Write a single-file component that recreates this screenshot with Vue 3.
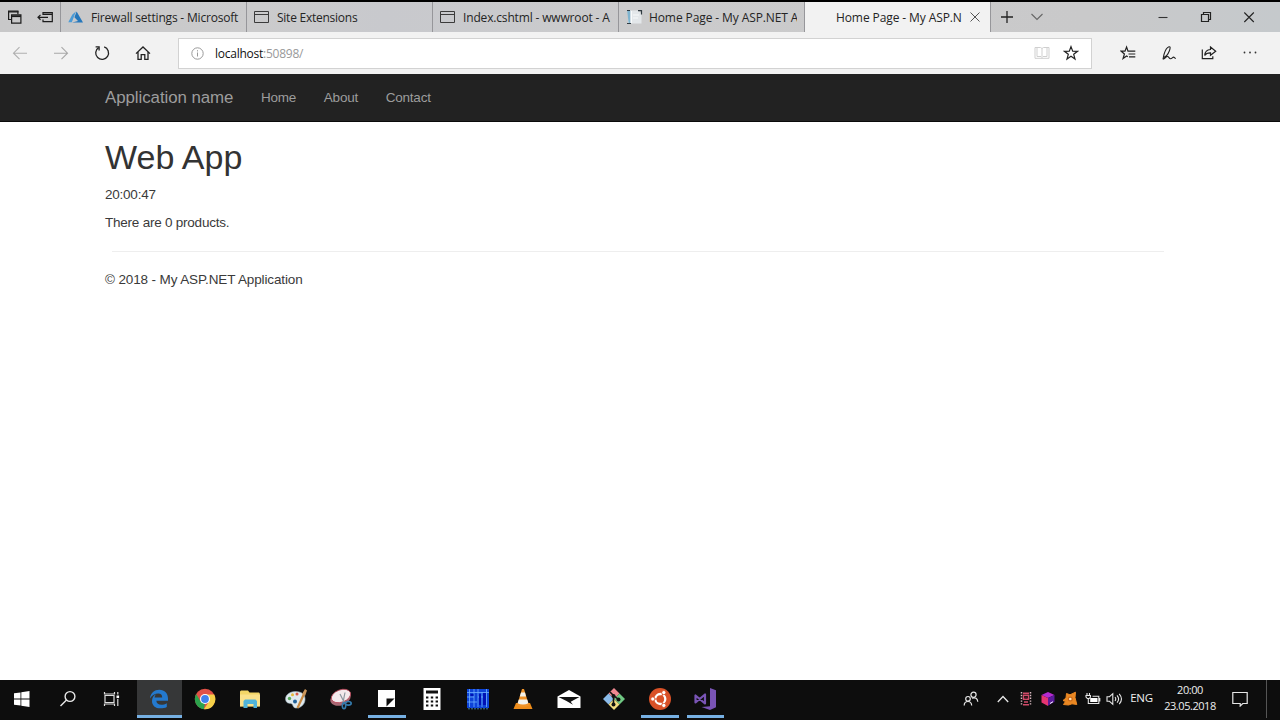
<script setup>
import { ref } from 'vue';

const tabs = ref([
  { title: 'Firewall settings - Microsoft', icon: 'azure', spacing: '-0.19px' },
  { title: 'Site Extensions', icon: 'window', spacing: '-0.25px' },
  { title: 'Index.cshtml - wwwroot - A', icon: 'window', spacing: '-0.16px' },
  { title: 'Home Page - My ASP.NET A', icon: 'page', spacing: '-0.1px' },
  { title: 'Home Page - My ASP.N', icon: '', active: true, spacing: '-0.1px' },
]);
const links = ref(['Home', 'About', 'Contact']);
const time = ref('20:00:47');
const products = ref(0);
</script>

<template>
  <div class="screen">
    <div class="tabbar">
      <div class="tabtools">
        <svg width="16" height="16" viewBox="0 0 16 16" fill="none" stroke="#1c1c1c" stroke-width="1.2">
          <path d="M4 10.500H1.600V2.200h9.300v3" />
          <path d="M1 2.800h10.500M4.600 5.800h9.300v8.400H4.600z" />
          <path d="M4.600 7.200h9.300" stroke-width="1.800" />
        </svg>
        <svg width="18" height="16" viewBox="0 0 18 16" fill="none" stroke="#1c1c1c" stroke-width="1.2">
          <path d="M6 6V3.600h9.300v9H6v-2M6 5.300h9.300M11 8.300H1M3.500 5.900 1 8.300 3.500 10.700" />
        </svg>
      </div>
      <div v-for="tab in tabs" :key="tab.title" class="tab" :class="{ active: tab.active }">
        <span class="tabicon">
          <svg v-if="tab.icon == 'azure'" width="16" height="14" viewBox="0 0 16 14">
            <path d="M8 1.200 4.200 4.800.300 12.200h3.500z" fill="#4b9bd6" />
            <path d="M8.600 1.500 6.400 7.200l3.600 3.900-6 1.300h11z" fill="#2577bb" />
          </svg>
          <svg v-if="tab.icon == 'window'" width="16" height="14" viewBox="0 0 16 14" fill="none" stroke="#3b3b3b">
            <path d="M.5 1.500h14v11H.5zM.5 4.500h14" />
          </svg>
          <svg v-if="tab.icon == 'page'" width="17" height="16" viewBox="0 0 17 16">
            <path d="M2 1.500h10.500l3 3v10H2z" fill="#e3e7ea" />
            <path d="M1.2 1.500h3v13H2.600z" fill="#7fb4cf" />
            <path d="M1 1.500h3M12 1.600h3.500v4M1 14.500h4" fill="none" stroke="#303b42" stroke-width="1.2" />
            <path d="M5.500 2v12M7 6h6M7 9h5" stroke="#f8fafb" />
          </svg>
        </span>
        <span class="tabtitle" :style="{ letterSpacing: tab.spacing }">{{ tab.title }}</span>
        <svg v-if="tab.active" class="close" width="10" height="10" viewBox="0 0 10 10" stroke="#555" stroke-width="1">
          <path d="M.5.5l9 9M9.500.5l-9 9" />
        </svg>
      </div>
      <div class="newtab">
        <svg width="12" height="12" viewBox="0 0 12 12" stroke="#222" stroke-width="1.3"><path d="M0 6h12M6 0v12" /></svg>
        <svg width="12" height="8" viewBox="0 0 12 8" fill="none" stroke="#666" stroke-width="1.1"><path d="M.5 1 6 6.500 11.500 1" /></svg>
      </div>
      <div class="controls">
        <svg width="12" height="12" viewBox="0 0 12 12" stroke="#333" stroke-width="1.1"><path d="M1.500 6.500h9" /></svg>
        <svg width="12" height="12" viewBox="0 0 12 12" fill="none" stroke="#222" stroke-width="1.2"><path d="M1.500 3.500h7v7h-7zM3.500 3.500v-2h7v7h-2" /></svg>
        <svg width="12" height="12" viewBox="0 0 12 12" stroke="#222" stroke-width="1.1"><path d="M1.300 1.500l9.500 9.500M10.800 1.500 1.300 11" /></svg>
      </div>
    </div>

    <div class="toolbar">
      <div class="tools">
        <svg width="16" height="16" viewBox="0 0 16 16" fill="none" stroke="#b0b0b0" stroke-width="1.1"><path d="M15 8.200H1.500M7.500 2.200l-6 6 6 6" /></svg>
        <svg width="16" height="16" viewBox="0 0 16 16" fill="none" stroke="#a8a8a8" stroke-width="1.1"><path d="M1 8.200h13.500M8.500 2.200l6 6-6 6" /></svg>
        <svg width="16" height="16" viewBox="0 0 16 16" fill="none" stroke="#222" stroke-width="1.3"><path d="M10.200 1.900A6.400 6.400 0 1 1 4.600 2.600" /><path d="M1.600 1.900h3.500v3.600" /></svg>
        <svg width="16" height="16" viewBox="0 0 16 16" fill="none" stroke="#222" stroke-width="1.3"><path d="M1 8.600 8 2l7 6.600M3 7v7.300h3.200V9.600h3.600v4.700H13V7" /></svg>
      </div>
      <div class="address">
        <svg class="info" width="13" height="13" viewBox="0 0 13 13" fill="none" stroke="#999"><circle cx="6.500" cy="6.500" r="5.700" /><path d="M6.500 5.500v4M6.500 3.200v1.200" /></svg>
        <span class="url">localhost<i>:50898/</i></span>
        <svg width="16" height="14" viewBox="0 0 16 14" fill="none" stroke="#cfcfcf"><path d="M1 1.500h5.500L8 2.500l1.500-1H15v10.800H1zM8 2.500v10M3 1.500v9h4M13 1.500v9H9" /></svg>
        <svg class="star" width="16" height="16" viewBox="0 0 16 16" fill="none" stroke="#222" stroke-width="1.2"><path d="M8 1.600l1.700 4.500 4.800.2-3.800 3 1.300 4.700-4-2.700L4 14l1.300-4.700-3.800-3 4.800-.2z" /></svg>
      </div>
      <div class="tools right">
        <svg width="16" height="16" viewBox="0 0 16 16" fill="none" stroke="#222" stroke-width="1.2"><path d="M9.200 6.100H8L6.600 2 5 6.200H1.200l3.200 2.800-1.300 4.500 3.500-2.600 1.200.8M8.500 6.200h6.800M8.500 9h6.800M9 11.800h6.300" /></svg>
        <svg width="16" height="16" viewBox="0 0 16 16" fill="none" stroke="#222" stroke-width="1.1"><path d="M2 14.300 3 9.500C4 6 6 2.500 8 1.800c1.600-.3 1.300 1.600.3 4.200C7 9.300 5 11.700 3 12.300M2 14.300C4 13.500 5 11.500 6.500 11.500s1.500 2.200 3 2.200 2-1.600 3-1.600 1 1.300 2.300 1.400" /></svg>
        <svg width="16" height="16" viewBox="0 0 16 16" fill="none" stroke="#222" stroke-width="1.2"><path d="M1.300 4.500v9.200h10.500v-2.500M9.500 2l5.200 4.200-5.200 4V7.900C6.800 7.800 5 8.500 3.700 10.500 4 6.800 6 4.600 9.500 4.500z" /></svg>
        <svg width="16" height="16" viewBox="0 0 16 16" fill="#333"><circle cx="2.500" cy="7.500" r=".9" /><circle cx="8" cy="7.500" r=".9" /><circle cx="13.500" cy="7.500" r=".9" /></svg>
      </div>
    </div>

    <nav class="navbar">
      <span class="brand">Application name</span>
      <span v-for="link in links" :key="link" class="link">{{ link }}</span>
    </nav>

    <main>
      <h1>Web App</h1>
      <p>{{ time }}</p>
      <p>There are {{ products }} products.</p>
      <hr>
      <p class="copy">© 2018 - My ASP.NET Application</p>
    </main>

    <div class="taskbar">
      <!-- start, search, task view -->
      <div class="task start"><svg width="16" height="16" viewBox="0 0 16 16" fill="#fff"><path d="M0 2.300 6.500 1.400v6.200H0zM7.300 1.300 15.500 0v7.600H7.300zM0 8.400h6.500v6.200L0 13.700zM7.300 8.400h8.200V16l-8.200-1.300z" /></svg></div>
      <div class="task start"><svg width="18" height="18" viewBox="0 0 18 18" fill="none" stroke="#e8e8e8" stroke-width="1.400"><circle cx="11" cy="6.500" r="4.900" /><path d="M7.500 10 1.500 16" /></svg></div>
      <div class="task view"><svg width="18" height="16" viewBox="0 0 18 16" fill="none" stroke="#ddd" stroke-width="1.200"><path d="M2 4.500h9v7H2zM1.500 1v2H11.500V1M1.500 15v-2H11.500v2M14.800 1v2.500M14.800 8v7" /><path d="M13.500 4.500h2.600v2.600h-2.600z" fill="#fff" stroke="none" /></svg></div>
      <!-- pinned programs -->
      <div class="task open current"><svg width="20" height="20" viewBox="0 0 20 20"><path d="M1 9.500C1.500 4 5.500.8 10.300.8c5.500 0 8.700 3.800 8.700 8.700v2.300H7.300c.2 2.700 2.300 3.900 5 3.900 2 0 3.800-.5 5.500-1.500v3.700c-1.800 1-4 1.400-6.300 1.400-5.200 0-8.500-2.800-8.500-7.400 0-3 1.500-5.400 4.500-6.800-1.300 1-1.800 2.400-2 3.500h7.700c0-2.400-1.300-4-3.900-4C6 4.600 3 6.200 1 9.500z" fill="#2479ce" /></svg></div>
      <div class="task">
        <svg width="22" height="22" viewBox="0 0 22 22">
          <circle cx="11" cy="11" r="10.200" fill="#e05146" />
          <path d="M2.200 5.900 6.600 13.600 11 15.500 9.900 21.200A10.200 10.200 0 0 1 2.200 5.900z" fill="#2ba24c" />
          <path d="M11 6.400h9.200a10.200 10.200 0 0 1-10.300 14.800L15 13.400z" fill="#f5d048" />
          <circle cx="11" cy="11" r="5" fill="#fff" /><circle cx="11" cy="11" r="3.900" fill="#4081ec" />
        </svg>
      </div>
      <div class="task">
        <svg width="22" height="20" viewBox="0 0 22 20">
          <path d="M1 2.500 2 1.500h7l1.500 2H20l.8 1v13H1z" fill="#f3d667" /><path d="M1 5.500h20v11.800H1z" fill="#fae18a" />
          <path d="M4.500 19v-7l1.500-1.500h10.500L18 12v7h-3.500v-4h-6v4z" fill="#50b4da" />
        </svg>
      </div>
      <div class="task">
        <svg width="24" height="22" viewBox="0 0 24 22">
          <path d="M2 13C0 8 5 3.500 11.500 3.500S21.500 7 21 12s-5 8.500-9.500 8c-3-.4-1.800-3.200-4-4.200C5.500 15 3.500 16 2 13z" fill="#dfe9ee" stroke="#9fb5c0" stroke-width=".6" />
          <circle cx="5.500" cy="10.500" r="1.700" fill="#58a95a" /><circle cx="8.500" cy="6.800" r="1.500" fill="#e5ba39" /><circle cx="13" cy="6" r="1.500" fill="#d65b47" /><circle cx="11" cy="13.500" r="2" fill="#216299" />
          <path d="M13.500 20 20 6" stroke="#c78a42" stroke-width="2.200" /><path d="M18 6 21 1l2 1.500L21 8z" fill="#c99559" />
        </svg>
      </div>
      <div class="task">
        <svg width="24" height="22" viewBox="0 0 24 22">
          <ellipse cx="11.500" cy="10.500" rx="10.500" ry="6.800" fill="#a86873" transform="rotate(-20 11.500 10.500)" />
          <ellipse cx="12" cy="8" rx="10" ry="6.200" fill="#f3e9ec" stroke="#b74457" stroke-width=".8" transform="rotate(-20 12 8)" />
          <path d="M11 6l4.500 9M16 4.500l-2 10" stroke="#8b969f" stroke-width="1.200" />
          <ellipse cx="15" cy="17.800" rx="1.700" ry="2.900" fill="none" stroke="#347bad" stroke-width="1.600" /><ellipse cx="19.300" cy="15.300" rx="2.900" ry="1.800" fill="none" stroke="#347bad" stroke-width="1.600" />
        </svg>
      </div>
      <div class="task open"><svg width="18" height="18" viewBox="0 0 18 18"><path d="M0 0h17v17H0z" fill="#fff" /><path d="M8.500 8.500h8L8.500 16.500z" fill="#0d0d0d" /></svg></div>
      <div class="task"><svg width="18" height="22" viewBox="0 0 18 22"><path d="M.5 0h17v22H.5z" fill="#fff" /><path d="M3 2.500h12v3H3z" fill="#111" /><path d="M3 9.500h12M3 13.500h12M3 17.500h12" stroke="#111" stroke-width="2" stroke-dasharray="2.400" /></svg></div>
      <div class="task"><svg width="22" height="21" viewBox="0 0 22 21"><path d="M0 0h22v19H0z" fill="#0d43d8" /><path d="M0 3.500h22M0 8h7M11 8h8M0 13h10M2.500 0v18M7 0v18M11 0v18M15 3v15M19.500 0v18" stroke="#6eb0ff" stroke-width=".8" /><path d="M3.500 5h3v2h-3zM12 5h2v11h-2zM16 4h3v12h-3z" fill="#0011b5" /><path d="M1 19.800h20" stroke="#427b9b" stroke-dasharray="2 1" /></svg></div>
      <div class="task"><svg width="20" height="22" viewBox="0 0 20 22"><path d="M3 15h14l2.500 6H.5z" fill="#ed8c1a" /><path d="M9 1h2l5 16.500c-3 1.700-9 1.700-12 0z" fill="#ef9329" /><path d="M8 4.500h4l1 4H6.800zM5.800 11.500h8.400l1.200 3.800c-3.500 1.600-7.500 1.600-10.800 0z" fill="#f2f2ec" /></svg></div>
      <div class="task"><svg width="24" height="20" viewBox="0 0 24 20"><path d="M.5 7.500 12 1l11.500 6.500V19H.5z" fill="#fff" /><path d="M1.500 8h21l-8.800 4.800L16 15.800 9.500 12z" fill="#111" /></svg></div>
      <div class="task">
        <svg width="24" height="24" viewBox="0 0 24 24">
          <path d="M12 1l5.500 5.500L12 12 6.500 6.500z" fill="#ef8890" /><path d="M6.500 6.500 12 12l-5.500 5.500L1 12z" fill="#8bbbe9" />
          <path d="M17.500 6.500 23 12l-5.500 5.500L12 12z" fill="#70c883" /><path d="M12 12l5.500 5.500L12 23l-5.500-5.500z" fill="#f2dc80" />
          <path d="M8 5l3.500 3.500v9M11.500 8.500l5 4" fill="none" stroke="#111" stroke-width="1.600" /><circle cx="11.500" cy="9" r="2" fill="#111" /><circle cx="16.500" cy="12.500" r="2" fill="#111" /><circle cx="11.500" cy="17.500" r="2" fill="#111" />
        </svg>
      </div>
      <div class="task open">
        <svg width="24" height="24" viewBox="0 0 24 24">
          <circle cx="12" cy="12" r="11" fill="#d95127" /><circle cx="12.300" cy="12" r="5" fill="none" stroke="#fff" stroke-width="2.300" />
          <path d="M12 12H5M12 12l3.500-6M12 12l3.500 6" stroke="#d95127" stroke-width="1.200" />
          <circle cx="4.800" cy="12" r="2.100" fill="#fff" stroke="#d95127" stroke-width=".8" /><circle cx="15.800" cy="5.600" r="2.100" fill="#fff" stroke="#d95127" stroke-width=".8" /><circle cx="15.800" cy="18.400" r="2.100" fill="#fff" stroke="#d95127" stroke-width=".8" />
        </svg>
      </div>
      <div class="task open"><svg width="24" height="24" viewBox="0 0 24 24"><path d="M17 1l6 2.300v17L17 23 8.500 20l8.500-.8z" fill="#7954b5" /><path d="M2.500 8.500v7L12 7.500v9z" fill="none" stroke="#7954b5" stroke-width="2.200" stroke-linejoin="round" /></svg></div>

      <div class="tray">
        <div class="people"><svg width="16" height="16" viewBox="0 0 16 16" fill="none" stroke="#e6e6e6" stroke-width="1.200"><circle cx="10.500" cy="3.800" r="2.600" /><circle cx="5" cy="7.800" r="2.300" /><path d="M1.200 14.500c0-2.600 1.500-4 3.800-4s3.500 1.500 3.700 4M9 7.300c3.500-1.500 5.500.5 5.800 3.500" /></svg></div>
        <div class="caret"><svg width="12" height="8" viewBox="0 0 12 8" fill="none" stroke="#e6e6e6" stroke-width="1.300"><path d="M.8 7 6 1.500 11.200 7" /></svg></div>
        <div class="trayicon"><svg width="12" height="14" viewBox="0 0 12 14"><path d="M1.500 0v14M10.500 0v14" stroke="#d8b9c0" stroke-width="1.500" stroke-dasharray="1.400 1.400" /><path d="M3 1.200h6M3.500 3.300h5v4h-5zM3 12.800h6M4 10h4" fill="none" stroke="#d04a68" stroke-width="1.400" /><path d="M5 4.500h2v2H5z" fill="#4a1422" /></svg></div>
        <div class="trayicon"><svg width="14" height="16" viewBox="0 0 14 16"><path d="M7 1l6.500 3L7 7 .5 4z" fill="#b52ad0" /><path d="M.5 4 7 7v8L.5 11.500z" fill="#e53572" /><path d="M13.500 4 7 7v8l6.500-4z" fill="#5a1a9a" /><path d="M7 15l6.500-4v4z" fill="#0d0d0d" /><path d="M9 12.500l3-1.800" stroke="#fff" /></svg></div>
        <div class="trayicon"><svg width="16" height="16" viewBox="0 0 16 16"><path d="M4.500 2.500 8 3.800 13.500 1.200 13 6.500l1.800 7L10 12.800 6.500 14 1.500 13.500l2-3L1 9.500l3-2.500z" fill="#e98722" stroke="#e98722" stroke-linejoin="round" /><circle cx="8.300" cy="8" r="2.500" fill="#c9681a" /><circle cx="8.300" cy="8" r="1.300" fill="#ffe6b5" /></svg></div>
        <div class="trayicon"><svg width="16" height="14" viewBox="0 0 16 14" fill="none" stroke="#e6e6e6" stroke-width="1.100"><path d="M2 1v2M4.500 1v2M1 3.500h4.500V5L4.200 6.500H2.300L1 5zM3.300 6.500v5h10.500V4.200H7.500M14.800 6v3.500" /><path d="M5.200 6h7.300v4H5.200z" fill="#fff" stroke="none" /></svg></div>
        <div class="trayicon"><svg width="17" height="14" viewBox="0 0 17 14" fill="none" stroke="#e6e6e6" stroke-width="1.100"><path d="M1 4.700h2.500l3.300-3v10.600l-3.300-3H1zM9 5c1 1.300 1 2.700 0 4M11 3.300c2 2.300 2 5.100 0 7.400M13.200 1.800c2.800 3.200 2.800 7.200 0 10.400" /></svg></div>
        <div class="lang">ENG</div>
        <div class="clock"><span>20:00</span><span>23.05.2018</span></div>
        <div class="notify"><svg width="16" height="16" viewBox="0 0 16 16" fill="none" stroke="#e6e6e6" stroke-width="1.200"><path d="M.8 1.500h14.400v11h-4.400L8.200 15v-2.500H.8z" /></svg></div>
      </div>
    </div>
  </div>
</template>

<style>
body {
  background: #fff;
  overflow: hidden;
}
</style>

<style scoped>
.screen {
  width: 1280px;
  height: 720px;
  display: flex;
  flex-direction: column;
  background: #fff;
  font-family: "Open Sans", "Noto Sans", sans-serif;
}
svg {
  display: block;
  flex: none;
}
.tabbar {
  height: 30px;
  border-top: 2px solid #000;
  display: flex;
  background: linear-gradient(90deg, #c8c8c9 0, #cbcbcc 20%, #c8c9cd 30%, #cbcbcc 50%, #c9c9ca 85%, #c5c9cc 100%);
}
.tabtools {
  width: 60px;
  display: flex;
  align-items: center;
  gap: 14px;
  padding-left: 7px;
  box-sizing: border-box;
}
.tab {
  width: 186px;
  box-sizing: border-box;
  border-left: 1px solid #96969a;
  display: flex;
  align-items: center;
  padding-left: 7px;
  font-size: 12px;
  color: #242424;
}
.tab.active {
  background: #f2f2f2;
  padding-left: 8px;
}
.tabicon {
  width: 23px;
}
.tabtitle {
  width: 148px;
  overflow: hidden;
  white-space: nowrap;
}
.active .tabtitle {
  width: 127px;
}
.close {
  margin-left: 7px;
}
.newtab {
  border-left: 1px solid #96969a;
  display: flex;
  align-items: center;
  gap: 18px;
  padding-left: 10px;
}
.controls {
  margin-left: auto;
  display: flex;
  align-items: center;
  gap: 31px;
  padding-right: 25px;
}
.toolbar {
  height: 42px;
  background: #f2f2f2;
  display: flex;
  align-items: center;
}
.tools {
  width: 166px;
  flex: none;
  display: flex;
  gap: 25px;
  padding-left: 12px;
}
.address {
  width: 914px;
  flex: none;
  height: 31px;
  box-sizing: border-box;
  border: 1px solid #d2d2d2;
  background: #fff;
  display: flex;
  align-items: center;
}
.info {
  margin-left: 12px;
}
.url {
  flex: 1;
  margin-left: 11px;
  font-size: 12px;
  letter-spacing: -0.25px;
  color: #111;
}
.url i {
  font-style: normal;
  color: #999;
}
.star {
  margin: 0 12px 0 13px;
}
.tools.right {
  width: auto;
  gap: 24.700px;
  padding-left: 28px;
}
.navbar {
  height: 48px;
  box-sizing: border-box;
  border-bottom: 1px solid #0a0a0a;
  background: #222;
  color: #9d9d9d;
  font-family: "Liberation Sans", Arial, sans-serif;
  font-size: 13.500px;
  letter-spacing: -0.2px;
  display: flex;
  align-items: center;
  gap: 27.600px;
  padding-left: 105px;
}
.brand {
  font-size: 16.870px;
  letter-spacing: -0.06px;
}
main {
  flex: 1;
  padding: 0 105px;
  font-family: "Liberation Sans", Arial, sans-serif;
  font-size: 13.500px;
  letter-spacing: -0.23px;
  line-height: 19px;
  color: #3a3a3a;
}
h1 {
  margin: 17px 0 9px;
  font-size: 34px;
  font-weight: 500;
  letter-spacing: 0;
  line-height: 37px;
  color: #333;
}
p {
  margin: 0 0 9px;
}
.copy {
  letter-spacing: -0.13px;
}
hr {
  margin: 19px 11px 18px 7px;
  border: 0;
  border-top: 1px solid #eee;
}
.taskbar {
  height: 40px;
  background: #0d0d0d;
  display: flex;
}
.task {
  width: 45.500px;
  height: 38px;
  flex: none;
  display: flex;
  align-items: center;
  justify-content: center;
  position: relative;
}
.task.start {
  padding-right: 1px;
  box-sizing: border-box;
}
.task.view {
  padding-right: 3px;
  box-sizing: border-box;
}
.task.current {
  background: #363738;
}
.open::after {
  content: "";
  position: absolute;
  left: 4px;
  right: 4px;
  bottom: 0;
  height: 3px;
  background: #76b0e3;
}
.current::after {
  left: 0;
  right: 0;
}
.tray {
  height: 37px;
  margin-left: auto;
  display: flex;
  align-items: center;
  color: #eee;
}
.tray > div {
  flex: none;
  display: flex;
  justify-content: center;
}
.people {
  width: 42px;
}
.caret {
  width: 23px;
}
.trayicon {
  width: 22.300px;
}
.lang {
  width: 31px;
  font-size: 11.500px;
  letter-spacing: -0.3px;
  line-height: 14px;
  padding-bottom: 2px;
}
.tray .clock {
  width: 66px;
  flex-direction: column;
  align-items: center;
  font-size: 11px;
  letter-spacing: -0.45px;
  line-height: 16px;
  padding-bottom: 2px;
}
.tray .notify {
  width: 44px;
  height: 38px;
  align-items: center;
  box-sizing: border-box;
  padding-right: 10px;
  margin-right: 13px;
  border-right: 1px solid #555;
}
</style>
